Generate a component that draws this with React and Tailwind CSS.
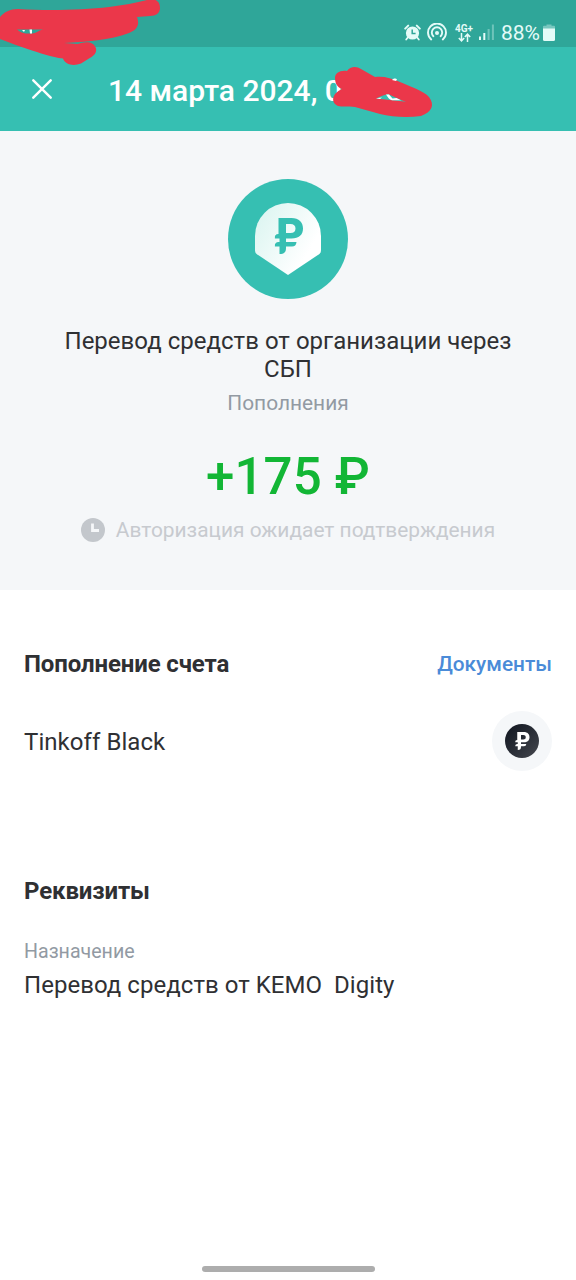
import { useState } from 'react'

const details = {
  title: '14 марта 2024, 0',
  name: 'Перевод средств от организации через СБП',
  category: 'Пополнения',
  amount: '+175 ₽',
  status: 'Авторизация ожидает подтверждения',
  account: 'Tinkoff Black',
  purpose: 'Перевод средств от KEMO  Digity',
}

function StatusBar() {
  return (
    <div className="h-[47px] bg-[#2fa699] flex justify-end items-start pt-[20px] pr-[21px] text-[#e4fbf8]">
      <svg className="mt-[4px]" width="17" height="17" viewBox="0 0 17 17">
        <circle cx="8.5" cy="9" r="6.6" fill="currentColor" />
        <path d="M1.2 4.6 4.2 1.6M15.8 4.6 12.8 1.6" stroke="currentColor" strokeWidth="2" strokeLinecap="round" />
        <path d="m3.8 13.5-1.6 2m11-2 1.6 2" stroke="currentColor" strokeWidth="1.8" strokeLinecap="round" />
        <path d="M8.2 5.4v4.2h3.4" fill="none" stroke="#2fa699" strokeWidth="1.5" />
      </svg>
      <svg className="ml-[6px] mt-[3px]" width="20" height="18" viewBox="0 0 20 18" fill="none" stroke="currentColor" strokeWidth="1.9" strokeLinecap="round">
        <path d="M4.2 16.4a9 9 0 1 1 11.6 0" />
        <path d="M6.4 13.2a5.2 5.2 0 1 1 7.2 0" />
        <circle cx="10" cy="9.9" r="2" fill="currentColor" stroke="none" />
      </svg>
      <div className="ml-[8px] mt-[4px] w-[18px] flex flex-col items-center">
        <span className="text-[10px] leading-[9px] font-bold">4G+</span>
        <svg width="13" height="9" viewBox="0 0 13 9" fill="none" stroke="currentColor" strokeWidth="1.5">
          <path d="M3.5 0v7.6M.8 5l2.7 2.8L6.2 5M9.5 9V1.2M6.8 4l2.7-2.8L12.2 4" />
        </svg>
      </div>
      <svg className="ml-[6px] mt-[4px]" width="16" height="17" viewBox="0 0 16 17" fill="currentColor">
        <rect x="0" y="12.5" width="2" height="3.5" />
        <rect x="4.3" y="9" width="2" height="7" />
        <rect x="8.6" y="5" width="2" height="11" opacity=".35" />
        <rect x="12.9" y="0.5" width="2" height="15.5" opacity=".35" />
      </svg>
      <span className="ml-[6px] text-[21px] leading-[26px] w-[39px]">88%</span>
      <svg className="ml-[3px] mt-[4px]" width="12" height="18" viewBox="0 0 12 18" fill="currentColor">
        <path d="M3.5 0.5h5v1.3H11a1 1 0 0 1 1 1V5H0V2.8a1 1 0 0 1 1-1h2.5z" opacity=".4" />
        <path d="M0 4.5h12v11a1.5 1.5 0 0 1-1.5 1.5h-9A1.5 1.5 0 0 1 0 15.5z" />
      </svg>
    </div>
  )
}

function Ruble({ className }) {
  return (
    <svg className={className} viewBox="0 0 29 36" fill="currentColor">
      <path fillRule="evenodd" d="M4 0h13c7.5 0 11.5 4.3 11.5 10.5S24.5 20.5 17 20.5h-5.5v3.5H22c-.3 3-1.8 4.5-4.5 4.5h-6v1.5c0 4-1.7 6-6.5 6v-7.5H0c.2-3 1.5-4.5 4-4.5h1V20.5H0c.2-3 1-4.5 4-4.5zM11.5 6V15h4.5c3.2 0 5-1.5 5-4.5S19.2 6 16 6z" />
    </svg>
  )
}

function Scribbles() {
  return (
    <svg className="absolute left-0 top-0 pointer-events-none" width="450" height="130" viewBox="0 0 450 130">
      <path
        fill="#eb374a"
        fillRule="evenodd"
        d="M0 17C4 12 10 9 18 9c30 2 65 1 91-2 14-2 27-4 38-7 7-2 13 0 13 8 0 5-4 8-10 8l-13 1c3 8 0 13-8 16-19 7-43 9-65 10l14 1c7-3 16-3 18 4.5 1 5-3 8-7 10l-8 5c-8 3-16 1-18-5-11-1-24-6-34-9C19 46 10 43 0 39zM17 29.5c4 3.5 9 4.500 15 4 4 0 6-3 11-4z"
      />
      <path d="M22 30h3l-1 2zM29.5 29.5h2.5v4h-2z" fill="#fff" />
      <path
        fill="#eb374a"
        fillRule="evenodd"
        d="M335 78c0-5 5-8 12-7 3-5 10-5 14-2l14 8c9-1 16 1 25 5 9 4 24 9 29 15 6 8 3 15-8 19-14 2-29 1-41-2-8-2-17-5-25-7-7-1-13 0-17-1-7-3-7-12 4-17-5-2-7-6-7-11zM376 98.5l30 3.2c-7-2-12-5.2-18-7.700-5 1-8 3-12 4.500z"
      />
      <path d="M386 94.500c2 3 3 5 6 5.800h9l-4.500-2.300-4 .5-3.500-4z M376 98.300l6-.8-2 1.500zM392 80c2-1.800 4-1.800 5-.5l-1 1.500z" fill="#fff" />
    </svg>
  )
}

export default function App() {
  const [open, setOpen] = useState(true)
  if (!open) return null

  return (
    <div className="relative w-full h-[1280px] bg-white overflow-hidden flex flex-col font-[Roboto,sans-serif] text-[#2f3033]">
      <StatusBar />
      <header className="h-[84px] bg-[#36bfb2] flex items-center pl-[32px] text-white">
        <button onClick={() => setOpen(false)} className="w-[20px] h-[20px]" aria-label="Закрыть">
          <svg width="20" height="20" viewBox="0 0 20 20" stroke="currentColor" strokeWidth="2.4" strokeLinecap="round">
            <path d="m1.3 1.3 17.4 17.4m0-17.4L1.3 18.7" />
          </svg>
        </button>
        <h1 className="ml-[56px] pt-[3px] text-[30px] leading-[36px] font-medium whitespace-nowrap">{details.title}</h1>
      </header>

      <section className="h-[459px] bg-[#f5f7f9] flex flex-col items-center pt-[48px]">
        <div className="w-[120px] h-[120px] rounded-full bg-[#36bfb2] flex justify-center pt-[24px]">
          <svg width="66" height="72" viewBox="0 0 66 72">
            <defs>
              <linearGradient id="pin" x1="0" y1="0.2" x2="0.8" y2="0.7">
                <stop offset="0" stopColor="#dcf5f1" />
                <stop offset="1" stopColor="#fff" />
              </linearGradient>
            </defs>
            <path d="M0 33a33 33 0 0 1 66 0v14c0 2-.6 3.2-2 4.2L33 72 2 51.2C.6 50.2 0 49 0 47z" fill="url(#pin)" />
            <svg x="19.5" y="14.5" width="29" height="37">
              <Ruble className="text-[#36bfb2]" />
            </svg>
          </svg>
        </div>
        <p className="mt-[28px] w-[480px] text-center text-[24px] leading-[28px] tracking-[0.02px]">{details.name}</p>
        <p className="mt-[8px] text-[20.9px] leading-[24px] text-[#929aa3]">{details.category}</p>
        <p className="mt-[32px] text-[51px] leading-[60px] font-medium tracking-[0.2px] text-[#12b635]">{details.amount}</p>
        <div className="mt-[11px] flex items-center">
          <svg width="24" height="24" viewBox="0 0 24 24">
            <circle cx="12" cy="12" r="12" fill="#c3c7cc" />
            <path d="M11.5 5.5v7H18" fill="none" stroke="#f5f7f9" strokeWidth="2.8" />
          </svg>
          <span className="ml-[11px] text-[20.9px] leading-[24px] text-[#c7cacf]">{details.status}</span>
        </div>
      </section>

      <section className="px-[24px] pt-[58px]">
        <div className="h-[32px] flex justify-between items-center">
          <h2 className="text-[24px] font-bold tracking-[-0.13px]">Пополнение счета</h2>
          <a className="pt-[2px] text-[20.8px] font-medium text-[#4a8bd8]">Документы</a>
        </div>
        <div className="mt-[31px] h-[60px] flex justify-between items-center">
          <span className="pt-[1px] text-[24px] tracking-[0.06px]">{details.account}</span>
          <div className="w-[60px] h-[60px] rounded-full bg-[#f5f7f9] flex items-center justify-center">
            <div className="w-[34px] h-[34px] rounded-full bg-linear-to-br from-[#10151f] to-[#45484f] flex items-center justify-center">
              <Ruble className="w-[15px] h-[18px] text-white" />
            </div>
          </div>
        </div>
      </section>

      <section className="px-[24px] pt-[104px]">
        <h2 className="text-[24px] leading-[32px] font-bold tracking-[-0.13px]">Реквизиты</h2>
        <p className="mt-[33px] text-[19.6px] leading-[24px] text-[#929aa3]">Назначение</p>
        <p className="mt-[5px] text-[24px] leading-[32px] tracking-[0.04px] whitespace-pre">{details.purpose}</p>
      </section>

      <div className="mt-auto mb-[8px] mx-auto w-[173px] h-[6px] rounded-full bg-[#adadad]" />
      <Scribbles />
    </div>
  )
}
